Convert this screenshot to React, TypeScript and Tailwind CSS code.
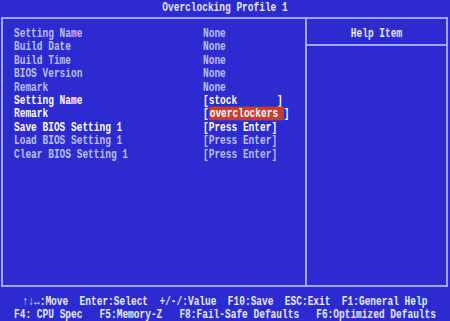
const rows: { label: string; value: string; bright?: boolean; hl?: boolean }[] = [
  { label: "Setting Name", value: "None" },
  { label: "Build Date", value: "None" },
  { label: "Build Time", value: "None" },
  { label: "BIOS Version", value: "None" },
  { label: "Remark", value: "None" },
  { label: "Setting Name", value: "[stock       ]", bright: true },
  { label: "Remark", value: "overclockers", bright: true, hl: true },
  { label: "Save BIOS Setting 1", value: "[Press Enter]", bright: true },
  { label: "Load BIOS Setting 1", value: "[Press Enter]" },
  { label: "Clear BIOS Setting 1", value: "[Press Enter]" },
];

export default function App() {
  return (
    <div
      className="w-[450px] h-[321px] bg-[#2b2bcf] text-[#c4c8ee] font-bold overflow-hidden flex flex-col"
      style={{ fontFamily: '"Liberation Mono", "DejaVu Sans Mono", monospace' }}
    >
      <div className="h-[17px] pt-[2px] flex items-center justify-center text-[9.5px] text-[#e8e8f8] whitespace-pre">
        <span className="scale-y-125">Overclocking Profile 1</span>
      </div>

      <div className="mx-[1px] mr-[2px] h-[270px] border-2 border-[#9ea6ee] flex">
        <div className="w-[302px] pt-[8px] pl-[11px] text-[9.5px] leading-[13.4px]">
          {rows.map((r, i) => (
            <div key={i} className={`flex whitespace-pre scale-y-125 ${r.bright ? "text-white" : "text-[#bcc0ec]"}`}>
              <span className="w-[189px]">{r.label}</span>
              {r.hl ? (
                <span>
                  [<span className="bg-[#c83c2c] pl-[1px]">overclockers </span>]
                </span>
              ) : (
                <span>{r.value}</span>
              )}
            </div>
          ))}
        </div>
        <div className="w-[2px] bg-[#9ea6ee]" />
        <div className="flex-1 flex flex-col">
          <div className="h-[27px] pt-[8px] border-b-2 border-[#9ea6ee] text-center text-[9.5px] leading-[13.4px] text-[#e8e8f8]">
            <div className="scale-y-125">Help Item</div>
          </div>
        </div>
      </div>

      <div className="flex-1 pt-[8px] flex flex-col items-center text-[9.5px] leading-[13px] text-[#e8e8f8] whitespace-pre">
        <div className="scale-y-125">↑↓↔:Move  Enter:Select  +/-/:Value  F10:Save  ESC:Exit  F1:General Help</div>
        <div className="scale-y-125">F4: CPU Spec   F5:Memory-Z   F8:Fail-Safe Defaults   F6:Optimized Defaults</div>
      </div>
    </div>
  );
}
